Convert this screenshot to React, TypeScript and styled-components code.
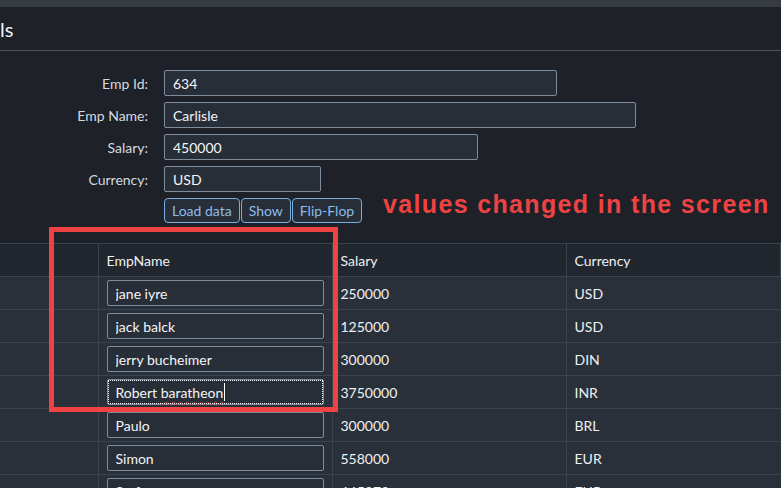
import React from "react";
import styled, { createGlobalStyle } from "styled-components";

const GlobalStyle = createGlobalStyle`
  html, body {
    margin: 0;
    padding: 0;
    background: #1e2128;
    overflow: hidden;
  }
  body {
    font-family: Lato, "Liberation Sans", sans-serif;
    color: #e6e9ed;
  }
`;

const Page = styled.div`
  position: relative;
  width: 781px;
  height: 488px;
  overflow: hidden;
  background: #1e2128;
`;

const TopStrip = styled.div`
  height: 7px;
  background: #363c41;
`;

const Header = styled.header`
  height: 43px;
  display: flex;
  align-items: center;
  border-bottom: 1px solid #4a5562;
`;

const Title = styled.h1`
  margin: 0;
  font-size: 20px;
  font-weight: 400;
  color: #f0f2f4;
`;

const Form = styled.form`
  display: grid;
  grid-template-columns: 148px 1fr;
  column-gap: 16px;
  row-gap: 6px;
  align-items: center;
  padding: 19px 0 20px;
`;

const Label = styled.label`
  text-align: right;
  font-size: 14px;
  color: #d5dae0;
`;

const Field = styled.input<{ $width: number }>`
  box-sizing: border-box;
  width: ${(p) => p.$width}px;
  height: 26px;
  padding: 0 8px;
  border: 1px solid #7f8c9b;
  border-radius: 2px;
  background: #282e38;
  color: #f4f5f7;
  font-family: inherit;
  font-size: 14px;
  outline: none;
`;

const ButtonGroup = styled.div`
  grid-column: 2;
  display: flex;
  gap: 1px;
`;

const Button = styled.button`
  height: 25px;
  padding: 0 7px;
  border: 1px solid #79ade0;
  border-radius: 4px;
  background: #282e38;
  color: #8cbcec;
  font-family: inherit;
  font-size: 14px;
`;

const Table = styled.table`
  width: 100%;
  table-layout: fixed;
  border-collapse: collapse;
  font-size: 14px;
`;

const HeadRow = styled.tr`
  background: #22272f;
  height: 33px;
`;

const BodyRow = styled.tr`
  background: #29303a;
  height: 33px;
`;

const Th = styled.th`
  border: 1px solid #3a444f;
  border-left: none;
  padding: 0 8px;
  text-align: left;
  font-weight: 400;
  color: #eef0f3;
  &:not(:first-child) {
    border-left: 1px solid #3a444f;
  }
`;

const Td = styled.td`
  border-top: 1px solid #3a444f;
  padding: 0 8px;
  color: #eef0f3;
  &:not(:first-child) {
    border-left: 1px solid #3a444f;
  }
`;

const CellInput = styled.input`
  box-sizing: border-box;
  display: block;
  width: 100%;
  height: 26px;
  padding: 0 8px;
  border: 1px solid #7f8c9b;
  border-radius: 2px;
  background: #282e38;
  color: #f4f5f7;
  font-family: inherit;
  font-size: 14px;
  outline: none;
`;

const FocusedInput = styled.div`
  box-sizing: border-box;
  display: flex;
  align-items: center;
  width: 100%;
  height: 26px;
  padding: 0 8px;
  border: 1px solid #7f8c9b;
  border-radius: 2px;
  background: #282e38;
  color: #f4f5f7;
  font-size: 14px;
  outline: 1px dotted #ffffff;
  outline-offset: -2px;
  white-space: pre;
`;

const Misspelled = styled.span`
  text-decoration: underline wavy #d92525;
  text-decoration-thickness: 1px;
  text-underline-offset: 3px;
`;

const Caret = styled.span`
  display: inline-block;
  width: 0;
  height: 18px;
  border-left: 1px solid #ffffff;
  margin-left: 1px;
`;

const Highlight = styled.div`
  position: absolute;
  left: 49px;
  top: 227px;
  width: 289px;
  height: 185px;
  box-sizing: border-box;
  border: 5px solid #ef4343;
  pointer-events: none;
`;

const Note = styled.div`
  position: absolute;
  left: 383px;
  top: 190px;
  font-family: "Liberation Sans", Arial, sans-serif;
  font-weight: 700;
  font-size: 25px;
  letter-spacing: 1.35px;
  color: #ef4343;
  white-space: nowrap;
`;

interface Employee {
  name: string;
  salary: string;
  currency: string;
}

const employees: Employee[] = [
  { name: "jane iyre", salary: "250000", currency: "USD" },
  { name: "jack balck", salary: "125000", currency: "USD" },
  { name: "jerry bucheimer", salary: "300000", currency: "DIN" },
  { name: "Robert baratheon", salary: "3750000", currency: "INR" },
  { name: "Paulo", salary: "300000", currency: "BRL" },
  { name: "Simon", salary: "558000", currency: "EUR" },
  { name: "Stefan", salary: "645873", currency: "EUR" },
];

const FOCUSED = 3;

export default function App() {
  return (
    <Page>
      <GlobalStyle />
      <TopStrip />
      <Header>
        <Title>ls</Title>
      </Header>

      <Form onSubmit={(e) => e.preventDefault()}>
        <Label>Emp Id:</Label>
        <Field $width={393} defaultValue="634" />
        <Label>Emp Name:</Label>
        <Field $width={472} defaultValue="Carlisle" />
        <Label>Salary:</Label>
        <Field $width={314} defaultValue="450000" />
        <Label>Currency:</Label>
        <Field $width={157} defaultValue="USD" />
        <ButtonGroup>
          <Button type="button">Load data</Button>
          <Button type="button">Show</Button>
          <Button type="button">Flip-Flop</Button>
        </ButtonGroup>
      </Form>

      <Table>
        <colgroup>
          <col style={{ width: 98 }} />
          <col style={{ width: 234 }} />
          <col style={{ width: 234 }} />
          <col />
        </colgroup>
        <thead>
          <HeadRow>
            <Th />
            <Th>EmpName</Th>
            <Th>Salary</Th>
            <Th>Currency</Th>
          </HeadRow>
        </thead>
        <tbody>
          {employees.map((emp, i) => (
            <BodyRow key={i}>
              <Td />
              <Td>
                {i === FOCUSED ? (
                  <FocusedInput>
                    Robert <Misspelled>baratheon</Misspelled>
                    <Caret />
                  </FocusedInput>
                ) : (
                  <CellInput defaultValue={emp.name} />
                )}
              </Td>
              <Td>{emp.salary}</Td>
              <Td>{emp.currency}</Td>
            </BodyRow>
          ))}
        </tbody>
      </Table>

      <Highlight />
      <Note>values changed in the screen</Note>
    </Page>
  );
}
